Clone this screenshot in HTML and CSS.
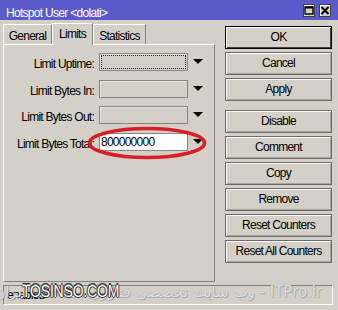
FILE: index.html
```html
<!DOCTYPE html>
<html>
<head>
<meta charset="utf-8">
<link rel="stylesheet" href="styles.css">
</head>
<body>
<div class="window">
  <div class="titlebar">
    <span class="title">Hotspot User &lt;dolati&gt;</span>
    <div class="tb-btns">
      <span class="tb-btn"><svg width="10" height="9" viewBox="0 0 10 9"><rect x="1" y="1" width="8" height="7" fill="none" stroke="#000" stroke-width="1.4"/><rect x="1" y="0.5" width="8" height="2" fill="#000"/></svg></span>
      <span class="tb-btn"><svg width="10" height="9" viewBox="0 0 10 9"><path d="M1.5 1 L8.5 8 M8.5 1 L1.5 8" stroke="#000" stroke-width="2"/></svg></span>
    </div>
  </div>
  <div class="main">
    <div class="left">
      <div class="tabs">
        <div class="tab tab-general">General</div>
        <div class="tab tab-limits active">Limits</div>
        <div class="tab tab-stats">Statistics</div>
      </div>
      <div class="panel">
        <div class="row"><span class="label">Limit Uptime:</span><div class="field"><span class="focus"></span></div><span class="arrow"></span></div>
        <div class="row"><span class="label">Limit Bytes In:</span><div class="field"></div><span class="arrow"></span></div>
        <div class="row"><span class="label">Limit Bytes Out:</span><div class="field"></div><span class="arrow"></span></div>
        <div class="row"><span class="label">Limit Bytes Total:</span><div class="field white">800000000</div><span class="arrow"></span></div>
      </div>
    </div>
    <div class="buttons">
      <div class="btn default">OK</div>
      <div class="btn">Cancel</div>
      <div class="btn gap-after">Apply</div>
      <div class="btn">Disable</div>
      <div class="btn">Comment</div>
      <div class="btn">Copy</div>
      <div class="btn">Remove</div>
      <div class="btn">Reset Counters</div>
      <div class="btn">Reset All Counters</div>
    </div>
  </div>
  <div class="status">enabled</div>

  <svg class="mark" width="124" height="38" viewBox="0 0 124 38"><ellipse cx="62" cy="19" rx="57.5" ry="14.5" fill="none" stroke="#d71f27" stroke-width="3.6"/></svg>
  <div class="wm-fa" dir="rtl">ITPro.ir - وب سایت تخصصی فناوری اطلاعات ایران</div>
  <div class="wm-en">TOSINSO.COM</div>
</div>
</body>
</html>
```

FILE: styles.css
```css
* { box-sizing: border-box; }
html, body { margin: 0; padding: 0; }
body {
  background: #d4d0c8;
  font-family: "Liberation Sans", Arial, sans-serif;
  font-size: 12px;
  letter-spacing: -0.75px;
  color: #000;
}
.window {
  position: relative;
  width: 338px;
  height: 310px;
  background: #d4d0c8;
  overflow: hidden;
}
.titlebar {
  height: 20px;
  background: #5a5acb;
  display: flex;
  align-items: flex-start;
  justify-content: space-between;
}
.title {
  color: #fff;
  padding: 6px 0 0 6px;
  line-height: 14px;
  letter-spacing: -0.7px;
}
.tb-btns {
  display: flex;
  gap: 4px;
  padding: 4px 7px 0 0;
}
.tb-btn {
  width: 12px;
  height: 13px;
  background: #d4d0c8;
  border: 1px solid #404040;
  box-shadow: inset 1px 1px 0 #fff;
  display: flex;
  align-items: center;
  justify-content: center;
}
.tb-btn svg { display: block; }

.main {
  display: flex;
  padding: 3px 0 0 3px;
  height: 262px;
}
.left {
  width: 212px;
  display: flex;
  flex-direction: column;
}
.tabs {
  height: 21px;
  display: flex;
  align-items: flex-end;
}
.tab {
  height: 20px;
  padding-top: 3px;
  line-height: 17px;
  text-align: center;
  border-top: 1px solid #fff;
  border-left: 1px solid #fff;
  border-right: 1px solid #808080;
  background: #d4d0c8;
}
.tab-general { width: 49px; }
.tab-limits { width: 41px; }
.tab-stats { width: 53px; }
.tab.active {
  height: 22px;
  padding-top: 0;
  line-height: 20px;
  margin-bottom: -1px;
  position: relative;
  z-index: 1;
}
.panel {
  height: 238px;
  border-top: 1px solid #fff;
  border-left: 1px solid #fff;
  border-right: 1px solid #808080;
  border-bottom: 1px solid #808080;
  padding-top: 8px;
  display: flex;
  flex-direction: column;
  gap: 9px;
}
.row {
  height: 18px;
  display: flex;
  align-items: flex-start;
}
.row:nth-child(2) { margin-bottom: -1px; }
.label {
  width: 90px;
  text-align: right;
  line-height: 22px;
  white-space: nowrap;
}
.field {
  margin-left: 5px;
  width: 89px;
  height: 18px;
  border: 1px solid #858585;
  background: #d4d0c8;
  box-shadow: inset 1px 1px 0 #e8e6e0;
  padding: 1px;
  line-height: 14px;
}
.focus {
  display: block;
  width: 100%;
  height: 100%;
  border: 1px dotted #222;
}
.field.white {
  background: #fff;
  box-shadow: none;
  padding: 0 0 0 1px;
  line-height: 16px;
}
.arrow {
  margin: 6px 0 0 5px;
  width: 0;
  height: 0;
  border-left: 5px solid transparent;
  border-right: 5px solid transparent;
  border-top: 5px solid #000;
}

.buttons {
  margin-left: 10px;
  width: 107px;
  padding-top: 3px;
  display: flex;
  flex-direction: column;
  gap: 3px;
}
.btn {
  height: 23px;
  border: 1px solid #6a6a6a;
  box-shadow: inset 1px 1px 0 #fff, inset -1px -1px 0 #a8a59e;
  text-align: center;
  line-height: 21px;
  white-space: nowrap;
}
.btn.default {
  border: 1px solid #000;
  box-shadow: inset 1px 1px 0 #fff, inset -1px -1px 0 #404040;
}
.btn.gap-after { margin-bottom: 6px; }

.status {
  margin: 3px 5px 0 3px;
  height: 20px;
  border-top: 1px solid #808080;
  border-left: 1px solid #808080;
  border-bottom: 1px solid #fff;
  border-right: 1px solid #fff;
  padding-left: 3px;
  line-height: 18px;
}

.mark {
  position: absolute;
  left: 85px;
  top: 124px;
}
.wm-fa {
  position: absolute;
  right: 16px;
  top: 282px;
  white-space: nowrap;
  font-family: "DejaVu Sans", sans-serif;
  font-size: 15px;
  letter-spacing: 0;
  line-height: 20px;
  color: rgba(240, 240, 246, 0.85);
  text-shadow: 0 0 1px #8a8a8a, 1px 1px 0 rgba(120,120,120,0.4);
}
.wm-en {
  position: absolute;
  left: 22px;
  top: 281px;
  font-family: "Liberation Sans", Arial, sans-serif;
  font-size: 14px;
  letter-spacing: -0.2px;
  line-height: 16px;
  color: #fff;
  transform: scaleY(1.2);
  transform-origin: left top;
  text-shadow: -1px 0 0 #333, 1px 0 0 #333, 0 -1px 0 #333, 0 1px 0 #333;
}
```
